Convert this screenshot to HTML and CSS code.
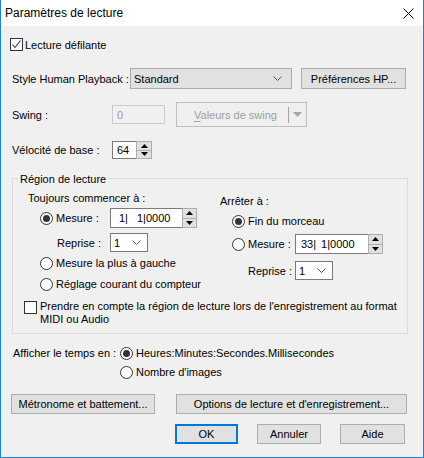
FILE: index.html
```html
<!DOCTYPE html>
<html lang="fr">
<head>
<meta charset="utf-8">
<title>Paramètres de lecture</title>
<link rel="stylesheet" href="styles.css">
</head>
<body>
<div class="window">
  <div class="titlebar">
    <span class="title">Paramètres de lecture</span>
    <svg class="close" width="11" height="11" viewBox="0 0 11 11"><path d="M0.5 0.5L10.5 10.5M10.5 0.5L0.5 10.5" stroke="#000" stroke-width="1" fill="none"/></svg>
  </div>
  <div class="body">
    <div class="row row-scroll">
      <span class="checkbox"><svg width="11" height="11" viewBox="0 0 11 11"><path d="M1.5 5.5L4 8.5L9.5 1.5" fill="none" stroke="#333" stroke-width="1.1"/></svg></span>
      <span class="cb-text">Lecture défilante</span>
    </div>

    <div class="row row-hp">
      <span class="lbl lbl-hp">Style Human Playback :</span>
      <div class="combo combo-std"><span>Standard</span><svg class="chev" width="9" height="5" viewBox="0 0 9 5"><path d="M0.5 0.5L4.5 4.5L8.5 0.5" fill="none" stroke="#555" stroke-width="1"/></svg></div>
      <div class="btn btn-hp">Préférences HP...</div>
    </div>

    <div class="row row-swing">
      <span class="lbl lbl-100">Swing :</span>
      <div class="edit edit-disabled">0</div>
      <div class="split">
        <span class="split-text"><u>V</u>aleurs de swing</span>
        <span class="split-sep"></span>
        <svg class="split-arrow" width="9" height="5" viewBox="0 0 9 5"><path d="M0 0H9L4.5 5Z" fill="#a6a6a6"/></svg>
      </div>
    </div>

    <div class="row row-vel">
      <span class="lbl lbl-100">Vélocité de base :</span>
      <div class="spin spin-vel">
        <div class="edit edit-vel">64</div>
        <div class="spinbtn">
          <span class="sb-half"><svg width="7" height="4" viewBox="0 0 7 4"><path d="M0 4H7L3.5 0Z" fill="#000"/></svg></span>
          <span class="sb-half"><svg width="7" height="4" viewBox="0 0 7 4"><path d="M0 0H7L3.5 4Z" fill="#000"/></svg></span>
        </div>
      </div>
    </div>

    <div class="group">
      <div class="group-title">Région de lecture</div>
      <div class="group-grid">
        <div class="col col-start">
          <div class="heading h-start">Toujours commencer à :</div>
          <div class="row r-mes-start">
            <div class="radio-lbl w70"><span class="radio on"></span><span>Mesure :</span></div>
            <div class="spin spin-mes">
              <div class="edit edit-mes"><span class="p1">1|</span><span class="p2">1|0000</span></div>
              <div class="spinbtn">
                <span class="sb-half"><svg width="7" height="4" viewBox="0 0 7 4"><path d="M0 4H7L3.5 0Z" fill="#000"/></svg></span>
                <span class="sb-half"><svg width="7" height="4" viewBox="0 0 7 4"><path d="M0 0H7L3.5 4Z" fill="#000"/></svg></span>
              </div>
            </div>
          </div>
          <div class="row r-rep-start">
            <span class="lbl w53">Reprise :</span>
            <div class="dd"><span>1</span><svg class="chev" width="9" height="5" viewBox="0 0 9 5"><path d="M0.5 0.5L4.5 4.5L8.5 0.5" fill="none" stroke="#555" stroke-width="1"/></svg></div>
          </div>
          <div class="row r-radio r-left"><span class="radio"></span><span>Mesure la plus à gauche</span></div>
          <div class="row r-radio r-counter"><span class="radio"></span><span>Réglage courant du compteur</span></div>
        </div>
        <div class="col col-end">
          <div class="heading h-end">Arrêter à :</div>
          <div class="row r-radio r-fin"><span class="radio on"></span><span>Fin du morceau</span></div>
          <div class="row r-mes-end">
            <div class="radio-lbl w63"><span class="radio"></span><span>Mesure :</span></div>
            <div class="spin spin-mes">
              <div class="edit edit-mes2"><span class="q1">33|</span><span class="q2">1|0000</span></div>
              <div class="spinbtn">
                <span class="sb-half"><svg width="7" height="4" viewBox="0 0 7 4"><path d="M0 4H7L3.5 0Z" fill="#000"/></svg></span>
                <span class="sb-half"><svg width="7" height="4" viewBox="0 0 7 4"><path d="M0 0H7L3.5 4Z" fill="#000"/></svg></span>
              </div>
            </div>
          </div>
          <div class="row r-rep-end">
            <span class="lbl w47">Reprise :</span>
            <div class="dd"><span>1</span><svg class="chev" width="9" height="5" viewBox="0 0 9 5"><path d="M0.5 0.5L4.5 4.5L8.5 0.5" fill="none" stroke="#555" stroke-width="1"/></svg></div>
          </div>
        </div>
      </div>
      <div class="row r-rec">
        <span class="checkbox"></span>
        <span class="rec-text">Prendre en compte la région de lecture lors de l'enregistrement au format<br>MIDI ou Audio</span>
      </div>
    </div>

    <div class="row r-time">
      <span class="lbl w107">Afficher le temps en :</span>
      <span class="radio on"></span><span class="rt">Heures:Minutes:Secondes.Millisecondes</span>
    </div>
    <div class="row r-time2">
      <span class="radio"></span><span class="rt">Nombre d'images</span>
    </div>

    <div class="row r-btns">
      <div class="btn btn-metro">Métronome et battement...</div>
      <div class="btn btn-opts">Options de lecture et d'enregistrement...</div>
    </div>
    <div class="row r-ok">
      <div class="btn btn-ok">OK</div>
      <div class="btn btn-cancel">Annuler</div>
      <div class="btn btn-help">Aide</div>
    </div>
  </div>
</div>
</body>
</html>
```
FILE: styles.css
```css
* { box-sizing: border-box; }
html, body { margin: 0; padding: 0; }
body {
  width: 424px;
  height: 458px;
  overflow: hidden;
  background: #f0f0f0;
  font-family: "Liberation Sans", Arial, sans-serif;
  font-size: 11px;
  line-height: 14px;
  color: #000;
}
.window {
  width: 424px;
  height: 458px;
  border: 1px solid #1883d7;
  border-top: none;
  background: #f0f0f0;
  display: flex;
  flex-direction: column;
}
.titlebar {
  height: 26px;
  flex: none;
  background: #fff;
  display: flex;
  align-items: center;
  justify-content: space-between;
  padding: 0 9px 0 4px;
}
.title { font-size: 12px; }
.close { display: block; }

.body {
  padding-left: 11px;
  display: flex;
  flex-direction: column;
  align-items: flex-start;
}
.row { display: flex; align-items: center; flex: none; }

/* checkbox */
.checkbox {
  width: 13px;
  height: 13px;
  border: 1px solid #333;
  background: #fff;
  display: flex;
  align-items: center;
  justify-content: center;
  flex: none;
}
.checkbox svg { display: block; }
.row-scroll { margin-top: 12px; margin-left: -2px; height: 13px; }
.cb-text { margin-left: 2px; }

.lbl { flex: none; }
.lbl-hp { width: 118px; }
.lbl-100 { width: 100px; }
.w53 { width: 53px; }
.w47 { width: 47px; }
.w107 { width: 107px; }

/* HP row */
.row-hp { margin-top: 17px; height: 21px; }
.combo {
  height: 21px;
  background: #e1e1e1;
  border: 1px solid #adadad;
  display: flex;
  align-items: center;
  justify-content: space-between;
  padding: 0 9px 0 3px;
}
.combo-std { width: 162px; }
.chev { display: block; }

.btn {
  height: 20px;
  background: #e1e1e1;
  border: 1px solid #adadad;
  display: flex;
  align-items: center;
  justify-content: center;
  flex: none;
}
.btn-hp { width: 105px; height: 21px; margin-left: 9px; }

/* swing */
.row-swing { margin-top: 13px; height: 25px; }
.edit {
  background: #fff;
  border: 1px solid #7a7a7a;
  display: flex;
  align-items: center;
  white-space: pre;
}
.edit-disabled {
  width: 53px;
  height: 19px;
  background: #f0f0f0;
  border-color: #cccccc;
  color: #9a9a9a;
  padding-left: 4px;
}
.split {
  width: 131px;
  height: 25px;
  margin-left: 11px;
  border: 1px solid #bfbfbf;
  background: #efefef;
  display: flex;
  align-items: center;
  color: #a0a0a0;
}
.split-text { width: 111px; text-align: center; padding-left: 6px; }
.split-text u { text-decoration-thickness: 1px; text-underline-offset: 2px; }
.split-sep { width: 1px; height: 16px; background: #a6a6a6; }
.split-arrow { margin-left: 4px; }

/* velocity */
.row-vel { margin-top: 14px; height: 18px; }
.spin { display: flex; align-items: stretch; }
.spin-vel { height: 18px; }
.edit-vel { width: 24px; padding-left: 4px; border-right: none; }
.spinbtn {
  width: 16px;
  border: 1px solid #adadad;
  background: #e1e1e1;
  display: flex;
  flex-direction: column;
}
.sb-half {
  flex: 1;
  display: flex;
  align-items: center;
  justify-content: center;
}
.sb-half + .sb-half { border-top: 1px solid #adadad; }
.sb-half svg { display: block; }

/* group */
.group {
  margin-top: 19px;
  width: 396px;
  border: 1px solid #dcdcdc;
  padding-bottom: 7px;
}
.group-title {
  width: fit-content;
  margin-top: -7px;
  margin-left: 4px;
  padding: 0 3px;
  background: #f0f0f0;
  line-height: 14px;
}
.group-grid {
  display: grid;
  grid-template-columns: 192px 1fr;
  padding-left: 15px;
  align-items: start;
}
.col { display: flex; flex-direction: column; align-items: flex-start; }
.heading { height: 14px; }
.h-start { margin-top: 5px; }
.h-end { margin-top: 8px; }

.radio {
  width: 13px;
  height: 13px;
  border: 1px solid #333;
  border-radius: 50%;
  background: #fff;
  display: flex;
  align-items: center;
  justify-content: center;
  flex: none;
  margin-right: 3px;
}
.radio.on::after {
  content: "";
  width: 7px;
  height: 7px;
  border-radius: 50%;
  background: #333;
}
.radio-lbl { display: flex; align-items: center; flex: none; }
.w70 { width: 70px; }
.w63 { width: 63px; }

.r-mes-start { margin-top: 3px; margin-left: 12px; height: 20px; }
.spin-mes { height: 20px; }
.edit-mes { width: 72px; border-right: none; }
.edit-mes2 { width: 73px; border-right: none; }
.spin-mes .spinbtn { width: 15px; }
.p1 { padding-left: 8px; }
.p2 { padding-left: 9px; }
.q1 { padding-left: 5px; }
.q2 { padding-left: 5px; }

.r-rep-start { margin-top: 5px; margin-left: 29px; height: 19px; }
.dd {
  width: 38px;
  height: 19px;
  background: #fff;
  border: 1px solid #7a7a7a;
  display: flex;
  align-items: center;
  justify-content: space-between;
  padding: 0 6px 0 3px;
}
.r-radio { height: 14px; margin-left: 12px; }
.r-left { margin-top: 4px; }
.r-counter { margin-top: 7px; }

.r-fin { margin-top: 6px; }
.r-mes-end { margin-top: 6px; margin-left: 12px; height: 20px; }
.r-rep-end { margin-top: 7px; margin-left: 28px; height: 19px; }

.r-rec {
  margin-top: 9px;
  margin-left: 11px;
  align-items: flex-start;
}
.r-rec .checkbox { margin-top: 1px; }
.rec-text { margin-left: 3px; line-height: 13px; }

/* time */
.r-time { margin-top: 12px; margin-left: 1px; height: 14px; }
.r-time2 { margin-top: 5px; margin-left: 108px; height: 14px; }

/* buttons */
.r-btns { margin-top: 15px; margin-left: -1px; }
.btn-metro { width: 144px; }
.btn-opts { width: 231px; margin-left: 21px; }
.r-ok { margin-top: 10px; margin-left: 163px; }
.btn-ok { width: 63px; border: 2px solid #0078d7; }
.btn-cancel { width: 64px; margin-left: 19px; }
.btn-help { width: 65px; margin-left: 19px; }
```
